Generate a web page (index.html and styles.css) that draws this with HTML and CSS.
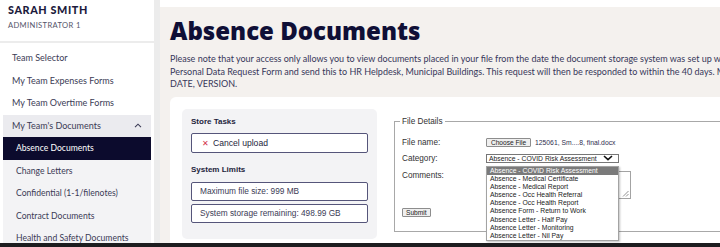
FILE: index.html
```html
<!DOCTYPE html>
<html lang="en">
<head>
<meta charset="utf-8">
<title>Absence Documents</title>
<link rel="stylesheet" href="styles.css">
</head>
<body>
<div class="page">
  <div class="app">
    <aside class="sidebar">
      <div class="profile">
        <div class="name">SARAH SMITH</div>
        <div class="role">ADMINISTRATOR 1</div>
      </div>
      <nav class="nav">
        <a class="nav-item">Team Selector</a>
        <a class="nav-item">My Team Expenses Forms</a>
        <a class="nav-item">My Team Overtime Forms</a>
        <div class="nav-group">
          <div class="nav-group-head">
            <span>My Team's Documents</span>
            <svg class="chev-up" width="8" height="5" viewBox="0 0 8 5"><polyline points="1,4.2 4,1.2 7,4.2" fill="none" stroke="#3b3b55" stroke-width="1.1"/></svg>
          </div>
          <div class="nav-sub">
            <a class="sub-item active">Absence Documents</a>
            <a class="sub-item">Change Letters</a>
            <a class="sub-item">Confidential (1-1/filenotes)</a>
            <a class="sub-item">Contract Documents</a>
            <a class="sub-item">Health and Safety Documents</a>
          </div>
        </div>
      </nav>
    </aside>
    <main class="main">
      <h1 class="title">Absence Documents</h1>
      <p class="intro">Please note that your access only allows you to view documents placed in your file from the date the document storage system was set up with effect from 1 April 2019.<br>Personal Data Request Form and send this to HR Helpdesk, Municipal Buildings. This request will then be responded to within the 40 days. More information<br>DATE, VERSION.</p>
      <section class="panel">
        <div class="card">
          <h3 class="card-title">Store Tasks</h3>
          <div class="task-box"><span class="x-mark">✕</span>Cancel upload</div>
          <h3 class="card-title limits">System Limits</h3>
          <div class="limit-box first">Maximum file size: 999 MB</div>
          <div class="limit-box">System storage remaining: 498.99 GB</div>
        </div>
        <fieldset class="details">
          <legend>File Details</legend>
          <div class="row row-file">
            <label>File name:</label>
            <span class="btn">Choose File</span>
            <span class="fname">125061, Sm....8, final.docx</span>
          </div>
          <div class="row row-cat">
            <label>Category:</label>
            <div class="select-wrap">
              <div class="select">
                <span>Absence - COVID Risk Assessment</span>
                <svg class="chev-down" width="10" height="6" viewBox="0 0 10 6"><polyline points="1,1 5,4.6 9,1" fill="none" stroke="#111" stroke-width="1.6"/></svg>
              </div>
              <ul class="options">
                <li class="selected">Absence - COVID Risk Assessment</li>
                <li>Absence - Medical Certificate</li>
                <li>Absence - Medical Report</li>
                <li>Absence - Occ Health Referral</li>
                <li>Absence - Occ Health Report</li>
                <li>Absence Form - Return to Work</li>
                <li>Absence Letter - Half Pay</li>
                <li>Absence Letter - Monitoring</li>
                <li>Absence Letter - Nil Pay</li>
              </ul>
            </div>
          </div>
          <div class="row row-comments">
            <label>Comments:</label>
            <div class="textarea">
              <svg class="grip" width="7" height="7" viewBox="0 0 7 7"><line x1="6.5" y1="1" x2="1" y2="6.5" stroke="#777" stroke-width="0.8"/><line x1="6.5" y1="4" x2="4" y2="6.5" stroke="#777" stroke-width="0.8"/></svg>
            </div>
          </div>
          <span class="btn submit">Submit</span>
        </fieldset>
      </section>
    </main>
  </div>
  <div class="bottom-bar"></div>
</div>
</body>
</html>
```
FILE: styles.css
```css
* { box-sizing: border-box; }
html, body { margin: 0; padding: 0; }
body {
  width: 720px;
  height: 247px;
  overflow: hidden;
  background: #fff;
  font-family: "Lato", "Open Sans", sans-serif;
}
.page { display: flex; flex-direction: column; height: 247px; }
.app { display: flex; height: 243px; overflow: hidden; background: #fff; }
.bottom-bar { height: 4px; background: #1d1d1f; }

/* Sidebar */
.sidebar {
  width: 160px;
  flex: none;
  background: #fff;
  border-right: 6px solid #ececec;
}
.profile {
  height: 43px;
  padding: 4px 8px 0;
  border-bottom: 2px solid #ececec;
}
.name {
  font-size: 10.8px;
  line-height: 11px;
  font-weight: 900;
  color: #1c1b3d;
  letter-spacing: 0.6px;
}
.role {
  margin-top: 5px;
  font-size: 7.6px;
  line-height: 10px;
  color: #55556a;
  letter-spacing: 0.35px;
}
.nav { padding-top: 4px; }
.nav-item {
  display: block;
  height: 22.5px;
  line-height: 22.5px;
  padding-left: 12px;
  font-size: 9px;
  color: #3b3b55;
}
.nav-group { margin: 0 3px; }
.nav-group-head {
  display: flex;
  align-items: center;
  justify-content: space-between;
  height: 22.5px;
  padding: 0 9px;
  background: #ebebef;
  font-size: 9px;
  color: #3b3b55;
}
.chev-up { display: block; }
.nav-sub { background: #f3f3f5; }
.sub-item {
  display: block;
  height: 22.5px;
  line-height: 22.5px;
  padding-left: 13px;
  font-size: 8.6px;
  color: #3b3b55;
}
.sub-item.active { background: #0c0b2d; color: #fff; }

/* Main */
.main {
  flex: 1;
  min-width: 0;
  margin-top: 7px;
  padding-left: 10px;
  background: #f4f1ee;
  overflow: hidden;
}
.title {
  margin: 0;
  padding-top: 9px;
  font-family: "Open Sans", sans-serif;
  font-weight: 800;
  font-size: 24px;
  line-height: 30px;
  color: #0f0f36;
  white-space: nowrap;
}
.intro {
  margin: 7px 0 0;
  font-size: 9px;
  line-height: 12.5px;
  color: #37375a;
  white-space: nowrap;
}
.panel {
  display: flex;
  gap: 17px;
  width: 800px;
  height: 160px;
  margin-top: 6px;
  padding: 12px;
  background: #fff;
  border-radius: 6px 0 0 0;
  font-family: "Liberation Sans", Arial, sans-serif;
}

/* Store tasks card */
.card {
  flex: none;
  width: 195px;
  height: 130px;
  padding: 8px 9px 0;
  background: #f3f3f5;
  border-radius: 5px;
}
.card-title {
  margin: 0;
  font-size: 8px;
  line-height: 10px;
  font-weight: 700;
  color: #1e1e3c;
}
.card-title.limits { margin-top: 12px; }
.task-box {
  margin-top: 6px;
  height: 20px;
  line-height: 18px;
  padding-left: 10px;
  background: #fff;
  border: 1px solid #55557a;
  border-radius: 2px;
  font-size: 8.6px;
  color: #1e1e3c;
}
.x-mark { color: #d3334d; margin-right: 4px; font-size: 8px; }
.limit-box {
  margin-top: 3px;
  height: 19px;
  line-height: 17px;
  padding-left: 8px;
  background: #fff;
  border: 1px solid #55557a;
  border-radius: 2px;
  font-size: 8.3px;
  color: #3b3b55;
}
.limit-box.first { margin-top: 7px; }

/* File details fieldset */
.details {
  flex: 1;
  height: 115px;
  margin: 8px 0 0;
  padding: 10px 0 14px 7px;
  border: 1px solid #a8a8a8;
  font-size: 8.2px;
  color: #333;
}
.details legend {
  margin-left: -2px;
  padding: 0 2px;
  font-size: 8.2px;
  line-height: 10px;
  color: #333;
}
.row { display: flex; align-items: center; }
.row label { width: 84px; flex: none; line-height: 9px; }
.row-file { height: 11px; }
.row-cat { height: 9px; margin-top: 6px; }
.row-comments { margin-top: 8px; align-items: flex-start; }
.btn {
  display: inline-block;
  height: 9px;
  padding: 0 3px;
  line-height: 7px;
  font-size: 6.6px;
  color: #222;
  background: #efefef;
  border: 1px solid #8d8d8d;
  border-radius: 1px;
}
.row-file .btn { width: 45px; text-align: center; padding: 0; }
.fname { margin-left: 4px; font-size: 6.8px; color: #2f2f4f; }
.select-wrap { position: relative; }
.select {
  display: flex;
  align-items: center;
  justify-content: space-between;
  width: 133px;
  height: 9px;
  padding: 0 5px 0 2px;
  border: 1px solid #767676;
  background: #fff;
  font-size: 6.8px;
  line-height: 7px;
  color: #222;
}
.chev-down { display: block; }
.options {
  position: absolute;
  top: 12px;
  left: 0;
  z-index: 5;
  width: 133px;
  margin: 0;
  padding: 0;
  list-style: none;
  background: #fff;
  border: 1px solid #a3a3a3;
  box-shadow: 1px 1px 2px rgba(0, 0, 0, 0.25);
}
.options li {
  height: 8.2px;
  line-height: 8.2px;
  padding-left: 3px;
  font-size: 6.8px;
  color: #222;
  white-space: nowrap;
}
.options li.selected { background: #7a7a7a; color: #fff; }
.textarea {
  position: relative;
  width: 145px;
  height: 28px;
  border: 1px solid #a3a3a3;
  background: #fff;
}
.grip { position: absolute; right: 1px; bottom: 1px; }
.submit { margin-top: 9px; padding: 0 3px; }
```
